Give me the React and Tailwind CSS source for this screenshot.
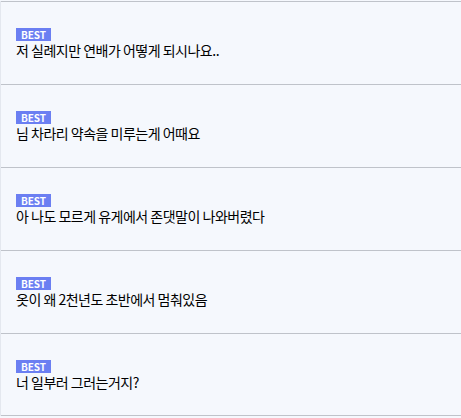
import React from "react";

const posts = [
  "저 실례지만 연배가 어떻게 되시나요..",
  "님 차라리 약속을 미루는게 어때요",
  "아 나도 모르게 유게에서 존댓말이 나와버렸다",
  "옷이 왜 2천년도 초반에서 멈춰있음",
  "너 일부러 그러는거지?",
];

const App = () => {
  return (
    <div
      className="w-[461px] h-[418px] bg-[#f5f8fd] pt-px overflow-hidden"
      style={{ fontFamily: '"Noto Sans CJK KR", "Noto Sans", sans-serif' }}
    >
      {/* Best list */}
      <ul className="border-l border-[#e4e8ef]">
        {posts.map((title, i) => (
          <li
            key={i}
            className={`h-[83px] border-t border-[#bfc3ca] pl-[15px] pt-[26px] flex flex-col items-start ${
              i === posts.length - 1 ? "border-b" : ""
            }`}
          >
            <span className="flex items-center justify-center w-[35px] h-[13px] bg-[#6b7ff2] text-white text-[10px] font-bold leading-none">
              BEST
            </span>
            <p className="mt-[1px] text-[14px] leading-[17px] tracking-[-0.5px] text-black">{title}</p>
          </li>
        ))}
      </ul>
    </div>
  );
};

export default App;
